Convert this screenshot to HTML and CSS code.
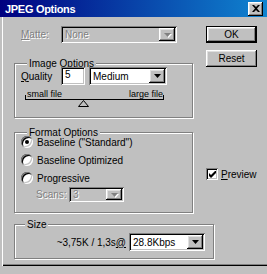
FILE: index.html
```html
<!DOCTYPE html>
<html lang="en">
<head>
    <meta charset="UTF-8">
    <title>JPEG Options</title>
    <link rel="stylesheet" href="styles.css">
</head>
<body>
    <div class="window">
        <div class="titlebar">
            <span>JPEG Options</span>
            <span class="close-btn">
                <svg width="8" height="7" viewBox="0 0 8 7"><path d="M0 0h2l2 2 2-2h2L5 3.5 8 7H6L4 5 2 7H0l3-3.5z" fill="#000"/></svg>
            </span>
        </div>

        <div class="content">
            <div class="top">
                <div class="left-col">
                    <div class="matte-row">
                        <span class="label disabled"><u>M</u>atte:</span>
                        <div class="select is-disabled matte-select">
                            <span class="select-text">None</span>
                            <span class="arrow"><svg width="7" height="4" viewBox="0 0 7 4"><path d="M0 0h7L3.5 4z"/></svg></span>
                        </div>
                    </div>

                    <div class="group image-opts">
                        <div class="group-title">Image Options</div>
                        <div class="quality-row">
                            <span class="label"><u>Q</u>uality</span>
                            <div class="field quality-input">5</div>
                            <div class="select medium-select">
                                <span class="select-text">Medium</span>
                                <span class="arrow"><svg width="7" height="4" viewBox="0 0 7 4"><path d="M0 0h7L3.5 4z"/></svg></span>
                            </div>
                        </div>
                        <div class="slider">
                            <div class="scale-labels">
                                <span>small file</span>
                                <span>large file</span>
                            </div>
                            <div class="scale-line"></div>
                            <svg class="thumb" width="11" height="7" viewBox="0 0 11 7"><path d="M5.5 0.5L10.5 6.5H0.5z" fill="#c0c0c0" stroke="#000"/></svg>
                        </div>
                    </div>

                    <div class="group format-opts">
                        <div class="group-title">Format Options</div>
                        <div class="radio-row">
                            <span class="radio checked"></span>
                            <span>Baseline ("Standard")</span>
                        </div>
                        <div class="radio-row">
                            <span class="radio"></span>
                            <span>Baseline Optimized</span>
                        </div>
                        <div class="radio-row">
                            <span class="radio"></span>
                            <span>Progressive</span>
                        </div>
                        <div class="scans-row">
                            <span class="label disabled">Scans:</span>
                            <div class="select is-disabled scans-select">
                                <span class="select-text">3</span>
                                <span class="arrow"><svg width="7" height="4" viewBox="0 0 7 4"><path d="M0 0h7L3.5 4z"/></svg></span>
                            </div>
                        </div>
                    </div>
                </div>

                <div class="right-col">
                    <button class="btn default-btn">OK</button>
                    <button class="btn reset-btn">Reset</button>
                    <div class="check-row">
                        <span class="checkbox">
                            <svg width="7" height="7" viewBox="0 0 7 7"><path d="M0 2v3l2 2 5-5V-1L2 4z" fill="#000"/></svg>
                        </span>
                        <span><u>P</u>review</span>
                    </div>
                </div>
            </div>

            <div class="group size-opts">
                <div class="group-title">Size</div>
                <div class="size-row">
                    <span>~3,75K / 1,3s<u>@</u></span>
                    <div class="select speed-select">
                        <span class="select-text">28.8Kbps</span>
                        <span class="arrow"><svg width="7" height="4" viewBox="0 0 7 4"><path d="M0 0h7L3.5 4z"/></svg></span>
                    </div>
                </div>
            </div>
        </div>
    </div>
</body>
</html>
```

FILE: styles.css
```css
* {
    box-sizing: border-box;
}
body {
    margin: 0;
    height: 274px;
    background-color: #c0c0c0;
    font-family: "Liberation Sans", Arial, sans-serif;
    font-size: 10px;
    color: black;
}
.window {
    width: 267px;
    height: 266px;
    display: flex;
    flex-direction: column;
    background-color: #c0c0c0;
    box-shadow: inset 2px 0 0 #c0c0c0, inset 3px 0 0 #fff, inset 0 -1px 0 #000, inset 0 -2px 0 #808080;
}
.titlebar {
    height: 17px;
    display: flex;
    align-items: center;
    justify-content: space-between;
    padding: 0 4px 0 5px;
    background: linear-gradient(to right, #000080, #1084d0);
    color: white;
    font-weight: bold;
    font-size: 11px;
    letter-spacing: -0.3px;
}
.close-btn {
    width: 15px;
    height: 14px;
    display: flex;
    align-items: center;
    justify-content: center;
    background-color: #c0c0c0;
    box-shadow: inset -1px -1px 0 #000, inset 1px 1px 0 #fff, inset -2px -2px 0 #808080, inset 2px 2px 0 #dfdfdf;
}

.content {
    padding: 9px 0 0 14px;
}
.top {
    display: flex;
}
.left-col {
    width: 180px;
}
.right-col {
    margin-left: 12px;
    display: flex;
    flex-direction: column;
    align-items: flex-start;
}

.label {
    display: inline-block;
}
.disabled {
    color: #808080;
    text-shadow: 1px 1px 0 #fff;
}

/* sunken fields and drop-downs */
.field, .select {
    background-color: white;
    box-shadow: inset 1px 1px 0 #808080, inset -1px -1px 0 #fff, inset 2px 2px 0 #000, inset -2px -2px 0 #c0c0c0;
    padding: 2px;
    height: 18px;
}
.select {
    display: flex;
    align-items: center;
}
.select-text {
    flex-grow: 1;
    padding-left: 2px;
}
.arrow {
    width: 16px;
    height: 100%;
    display: flex;
    align-items: center;
    justify-content: center;
    background-color: #c0c0c0;
    box-shadow: inset -1px -1px 0 #000, inset 1px 1px 0 #fff, inset -2px -2px 0 #808080, inset 2px 2px 0 #dfdfdf;
}
.select.is-disabled {
    background-color: #c0c0c0;
    color: #808080;
    text-shadow: 1px 1px 0 #fff;
}
.select.is-disabled .arrow svg {
    fill: #808080;
    filter: drop-shadow(1px 1px 0 #fff);
}

.matte-row {
    display: flex;
    align-items: center;
    padding-left: 7px;
}
.matte-row .label {
    width: 40px;
}
.matte-select {
    width: 116px;
    height: 17px;
}

/* group boxes */
.group {
    border: 1px solid #808080;
    box-shadow: 1px 1px 0 #fff, inset 1px 1px 0 #fff;
}
.group-title {
    display: table;
    margin: -6px 0 0 12px;
    padding: 0 2px;
    line-height: 11px;
    background-color: #c0c0c0;
}

.image-opts {
    width: 179px;
    height: 55px;
    margin-top: 20px;
}
.image-opts .group-title {
    margin-bottom: -2px;
}
.quality-row {
    display: flex;
    align-items: center;
    padding-left: 6px;
}
.quality-row .label {
    width: 40px;
}
.quality-input {
    width: 24px;
    padding-left: 4px;
    line-height: 12px;
}
.medium-select {
    width: 78px;
    margin-left: 4px;
}
.slider {
    width: 139px;
    margin: 5px 0 0 10px;
}
.scale-labels {
    display: flex;
    justify-content: space-between;
    padding: 0 1px 0 2px;
    font-size: 9px;
    line-height: 9px;
    height: 9px;
}
.scale-line {
    height: 5px;
    margin-top: -4px;
    border: 1px solid black;
    border-top: 0;
}
.thumb {
    display: block;
    margin-left: 53px;
}

.format-opts {
    width: 179px;
    height: 81px;
    margin-top: 14px;
}
.format-opts .group-title {
    margin-bottom: -5px;
}
.radio-row {
    display: flex;
    align-items: center;
    gap: 4px;
    height: 18px;
    line-height: 11px;
    padding-left: 6px;
}
.radio {
    width: 12px;
    height: 12px;
    border-radius: 50%;
    background-color: white;
    box-shadow: inset 1px 1px 0 #808080, inset -1px -1px 0 #fff, inset 2px 2px 0 #000, inset -2px -2px 0 #c0c0c0;
    display: flex;
    align-items: center;
    justify-content: center;
}
.radio.checked::after {
    content: "";
    width: 4px;
    height: 4px;
    border-radius: 50%;
    background-color: black;
}
.scans-row {
    display: flex;
    align-items: center;
    padding-left: 21px;
}
.scans-row .label {
    width: 33px;
}
.scans-select {
    width: 55px;
    height: 15px;
}

/* buttons */
.btn {
    width: 51px;
    height: 17px;
    padding: 0;
    border: 0;
    font-family: inherit;
    font-size: 10px;
    color: black;
    background-color: #c0c0c0;
    box-shadow: inset -1px -1px 0 #000, inset 1px 1px 0 #fff, inset -2px -2px 0 #808080, inset 2px 2px 0 #dfdfdf;
}
.default-btn {
    border: 1px solid black;
}
.reset-btn {
    margin-top: 7px;
}
.check-row {
    display: flex;
    align-items: center;
    gap: 3px;
    margin-top: 101px;
}
.checkbox {
    width: 12px;
    height: 12px;
    display: flex;
    align-items: center;
    justify-content: center;
    background-color: white;
    box-shadow: inset 1px 1px 0 #808080, inset -1px -1px 0 #fff, inset 2px 2px 0 #000, inset -2px -2px 0 #c0c0c0;
}

.size-opts {
    width: 200px;
    height: 35px;
    margin-top: 11px;
}
.size-opts .group-title {
    margin-left: 10px;
}
.size-row {
    display: flex;
    align-items: center;
    justify-content: flex-end;
    gap: 3px;
    margin-top: 3px;
    padding-right: 8px;
}
.speed-select {
    width: 76px;
}
```
